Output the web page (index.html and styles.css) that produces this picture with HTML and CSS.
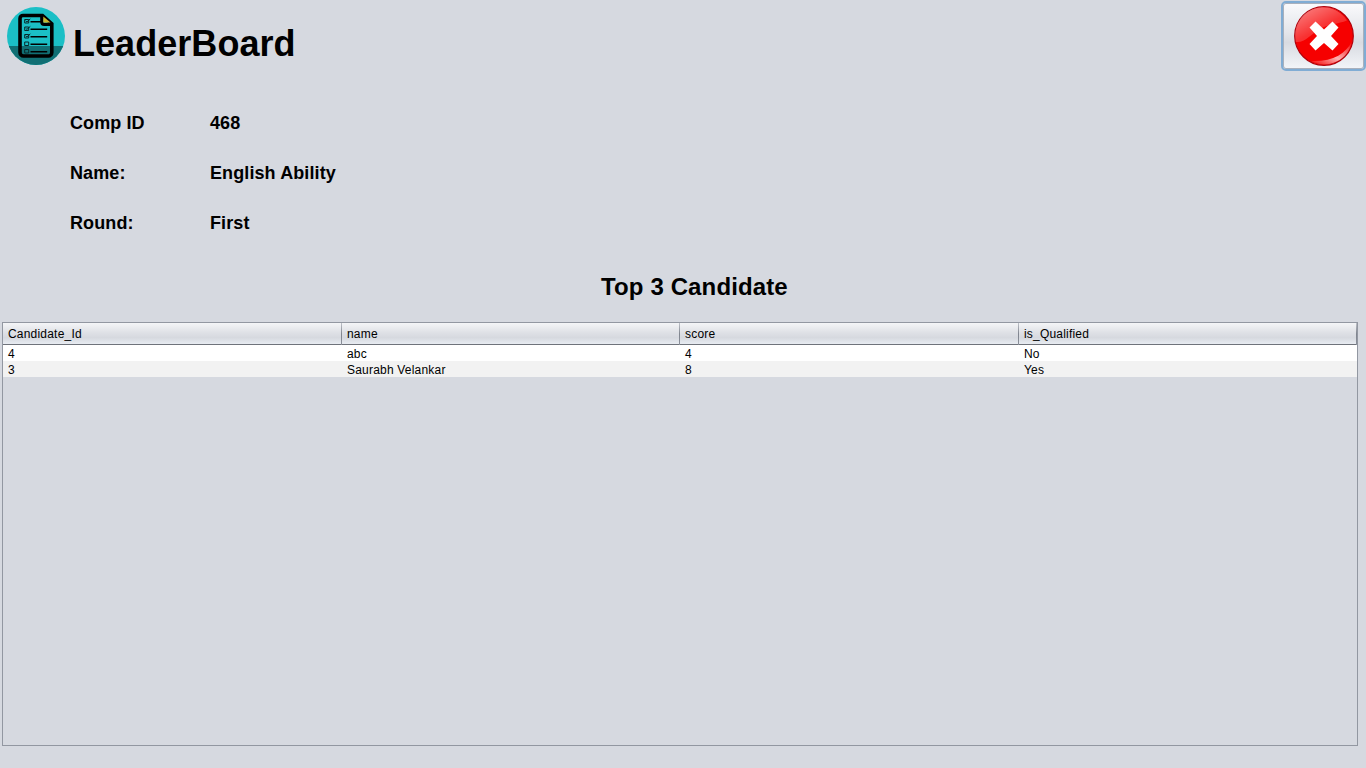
FILE: index.html
```html
<!DOCTYPE html>
<html lang="en">
<head>
<meta charset="utf-8">
<title>LeaderBoard</title>
<link rel="stylesheet" href="styles.css">
</head>
<body>
<header class="header">
  <svg class="logo" width="58" height="58" viewBox="0 0 58 58">
    <defs><clipPath id="disc"><circle cx="29" cy="29" r="29"/></clipPath></defs>
    <g clip-path="url(#disc)">
      <rect width="58" height="58" fill="#1bbfc6"/>
      <rect y="39" width="58" height="19" fill="#116f74"/>
    </g>
    <path d="M16 8.500h19.500l9.300 8.300v28.700a3.500 3.500 0 0 1-3.500 3.500H16.500a3.500 3.500 0 0 1-3.500-3.500V11.500a3 3 0 0 1 3-3z" fill="none" stroke="#000" stroke-width="3.600"/>
    <path d="M34.800 8.500v6.500a2.300 2.300 0 0 0 2.300 2.300h7.600" fill="none" stroke="#000" stroke-width="3.200"/>
    <path d="M36.300 9.600v6h7.200z" fill="#c9b52e"/>
    <g fill="none" stroke="#08292c" stroke-width="1">
      <path d="M17.700 12.500h4v3.500h-4zM17.700 20h4v3.500h-4zM17.700 27.500h4v3.500h-4zM17.700 35h4v3.500h-4zM17.700 42.500h4v3.500h-4z"/>
      <path d="M18.700 13.800l1.200 1.100 3.400-3M18.700 21.300l1.200 1.100 3.400-3M18.700 28.800l1.200 1.100 3.400-3"/>
    </g>
    <path d="M23.500 14.800H34M23.500 22.300h16.700M23.500 29.800h16.700M23.500 37.300h16.700M23.500 44.800h16.700" stroke="#000" stroke-width="1.400"/>
  </svg>
  <h1 class="title">LeaderBoard</h1>
  <button class="close" aria-label="Close">
    <svg width="60" height="60" viewBox="0 0 60 60">
      <defs>
        <linearGradient id="shine" x1="0" y1="0" x2=".8" y2="1"><stop offset="0" stop-color="#fff" stop-opacity=".55"/><stop offset=".6" stop-color="#fff" stop-opacity=".2"/><stop offset="1" stop-color="#fff" stop-opacity=".1"/></linearGradient>
        <linearGradient id="glow" x1="0" y1="1" x2="1" y2="0"><stop offset="0" stop-color="#fff" stop-opacity="0"/><stop offset=".45" stop-color="#fff" stop-opacity=".7"/><stop offset="1" stop-color="#fff" stop-opacity="0"/></linearGradient>
      </defs>
      <circle cx="30" cy="30" r="29.300" fill="#f60000" stroke="#b0000a" stroke-width="1.200"/>
      <path d="M2 36A28 28 0 0 1 53 14.500C44 18 35 18 26 23S11 37 2 36z" fill="url(#shine)"/>
      <path d="M17 55A28 28 0 0 0 58 35C52 48 38 56 17 55z" fill="url(#glow)"/>
      <path d="M21.500 15.500l8.500 8 8.500-8 6 6L37 30l7.500 8-6 6.500L30 37l-8.500 7.500-6-6.500 7.500-8-7.500-8.500z" fill="#fff"/>
    </svg>
  </button>
</header>
<dl class="details">
  <dt>Comp ID</dt><dd>468</dd>
  <dt>Name:</dt><dd>English Ability</dd>
  <dt>Round:</dt><dd>First</dd>
</dl>
<h2 class="subtitle">Top 3 Candidate</h2>
<div class="table">
  <div class="row head"><span>Candidate_Id</span><span>name</span><span>score</span><span>is_Qualified</span></div>
  <div class="row"><span>4</span><span>abc</span><span>4</span><span>No</span></div>
  <div class="row alt"><span>3</span><span>Saurabh Velankar</span><span>8</span><span>Yes</span></div>
</div>
</body>
</html>
```
FILE: styles.css
```css
* { box-sizing: border-box; }
body {
  margin: 0;
  width: 1366px;
  height: 768px;
  overflow: hidden;
  background: #d6d9e0;
  color: #000;
  font-family: "Liberation Sans", Arial, sans-serif;
}
.header { display: flex; align-items: flex-start; height: 98px; }
.logo { margin: 7px 0 0 7px; flex: none; }
.title { margin: 23px 0 0 8px; font-size: 36px; line-height: 41px; letter-spacing: 0.05px; }
.close {
  display: flex;
  align-items: center;
  justify-content: center;
  width: 85px;
  height: 70px;
  margin: 1px 0 0 auto;
  padding: 0;
  border: 2px solid #80acd4;
  border-radius: 5px;
  background: linear-gradient(#fafafc 0%, #e3e5ea 45%, #d8dbe1 60%, #f3f5f9 100%);
  box-shadow: inset 0 0 0 1px #a9b0bc;
}
.details {
  display: grid;
  grid-template-columns: 140px 1fr;
  grid-auto-rows: 50px;
  align-items: center;
  height: 150px;
  margin: 0 0 0 70px;
  font-size: 18px;
  font-weight: bold;
  letter-spacing: 0.1px;
}
.details dd { margin: 0; }
.subtitle { margin: 25px 0 22px 601px; font-size: 24px; line-height: 27px; letter-spacing: 0.13px; }
.table {
  width: 1356px;
  height: 424px;
  margin-left: 2px;
  border: 1px solid #9297a1;
  font-size: 12px;
  letter-spacing: 0.2px;
}
.row {
  display: grid;
  grid-template-columns: 339px 338px 339px 338px;
  height: 16px;
  line-height: 18px;
  background: #fff;
}
.row span { padding-left: 5px; }
.alt { background: #f2f2f2; }
.head {
  height: 22px;
  line-height: 22px;
  border-bottom: 1px solid #6f737b;
  background: linear-gradient(#f4f5f7 0%, #dfe1e6 45%, #d6d9df 70%, #e8ecf2 100%);
}
.head span {
  border-right: 1px solid;
  border-image: linear-gradient(#c4c7ce, #7f848e 50%, #8d929c) 1;
}
```
